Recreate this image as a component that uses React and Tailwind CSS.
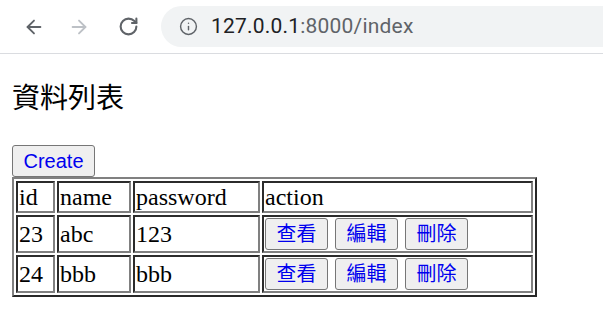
import React from 'react';
import { ArrowLeft, ArrowRight, RotateCw, Info } from 'lucide-react';

const rows = [
  { id: 23, name: 'abc', password: '123' },
  { id: 24, name: 'bbb', password: 'bbb' },
];

const cell =
  'border-2 border-t-[#2b2b2b] border-l-[#2b2b2b] border-r-[#808080] border-b-[#808080] p-px align-middle text-left font-normal';

function ActionButton({ label }) {
  return (
    <button className="w-[63px] h-[32px] bg-[#efefef] border border-[#767676] rounded-[3px] text-[20px] leading-none text-[#0000ee] font-['Liberation_Sans','Noto_Sans_CJK_TC',sans-serif]">
      {label}
    </button>
  );
}

export default function App() {
  return (
    <div className="w-[603px] h-[331px] bg-white overflow-hidden text-black">
      {/* Browser toolbar */}
      <header className="h-[54px] border-b border-[#dadce0] flex items-center">
        <div className="flex items-center pl-[23px] gap-[23px] text-[#5f6368]">
          <ArrowLeft size={22} strokeWidth={2} />
          <ArrowRight size={22} strokeWidth={2} className="text-[#bdc1c6]" />
          <RotateCw size={21} strokeWidth={2.4} className="ml-[5px]" />
        </div>
        <div className="ml-[22px] flex-1 h-[41px] rounded-l-full bg-[#f1f3f4] flex items-center pl-[18px]">
          <Info size={19} strokeWidth={1.8} className="text-[#5f6368]" />
          <span className="ml-[13px] text-[21px] font-['Roboto',sans-serif] text-[#202124] tracking-[0.2px]">
            127.0.0.1<span className="text-[#5f6368]">:8000/index</span>
          </span>
        </div>
      </header>

      {/* Page */}
      <main className="px-[12px] font-['Liberation_Serif','Noto_Sans_CJK_TC',serif]">
        <h3 className="mt-[29px] mb-[30px] text-[28px] leading-[32px] font-normal">資料列表</h3>
        <button className="block w-[83px] h-[32px] bg-[#efefef] border border-[#767676] rounded-[3px] text-[20px] leading-none text-[#0000ee] font-['Liberation_Sans',sans-serif]">
          Create
        </button>
        <table className="w-[525px] table-fixed border-separate border-spacing-[2px] border-2 border-t-[#808080] border-l-[#808080] border-r-[#282828] border-b-[#282828] text-[24px] leading-[26px]">
          <tbody>
            <tr>
              <td className={`${cell} w-[39px]`}>id</td>
              <td className={`${cell} w-[74px]`}>name</td>
              <td className={`${cell} w-[127px]`}>password</td>
              <td className={cell}>action</td>
            </tr>
            {rows.map((r) => (
              <tr key={r.id}>
                <td className={cell}>{r.id}</td>
                <td className={cell}>{r.name}</td>
                <td className={cell}>{r.password}</td>
                <td className={cell}>
                  <div className="flex gap-[7px]">
                    <ActionButton label="查看" />
                    <ActionButton label="編輯" />
                    <ActionButton label="刪除" />
                  </div>
                </td>
              </tr>
            ))}
          </tbody>
        </table>
      </main>
    </div>
  );
}
